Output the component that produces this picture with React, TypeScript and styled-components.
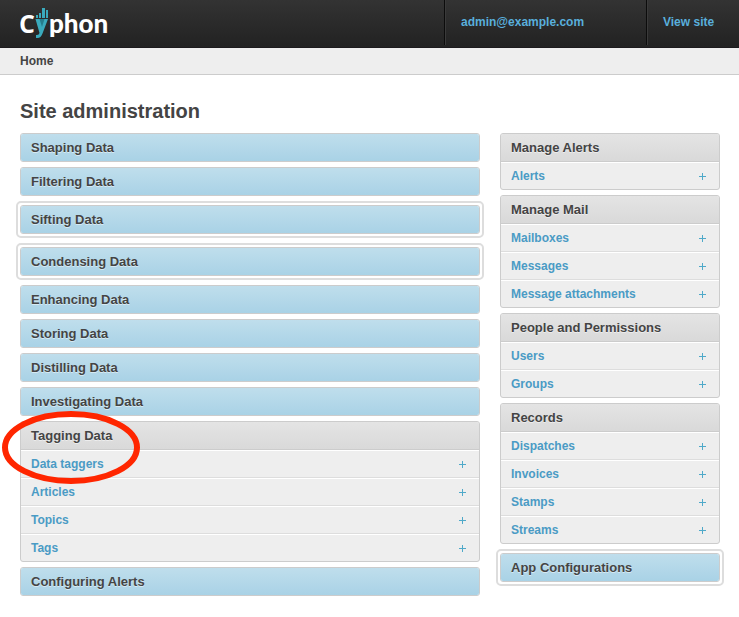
import React from "react";
import styled, { createGlobalStyle, css } from "styled-components";

const GlobalStyle = createGlobalStyle`
  *, *::before, *::after { box-sizing: border-box; }
  body {
    margin: 0;
    background: #fff;
    color: #444;
    font-family: "Liberation Sans", Arial, sans-serif;
    font-size: 12px;
    font-weight: bold;
  }
  a { color: inherit; text-decoration: none; }
`;

const TopBar = styled.header`
  display: flex;
  justify-content: space-between;
  height: 48px;
  padding-left: 20px;
  background: linear-gradient(#333, #222);
  border-bottom: 1px solid #1c1a1d;
`;

const LogoLink = styled.a`
  display: block;
`;

const LogoSvg = styled.svg`
  display: block;
  font-family: Lato, "Open Sans", sans-serif;
  font-size: 26px;
  font-weight: 900;
  fill: #fff;
`;

const LogoInitial = styled.text`
  font-family: "Open Sans", "Noto Sans", sans-serif;
  font-size: 25px;
  font-weight: 700;
`;

const UserTools = styled.nav`
  display: flex;
  height: 45px;
`;

const ToolLink = styled.a<{ $wide?: boolean }>`
  padding: 14px 0 0 16px;
  width: ${({ $wide }) => ($wide ? 202 : 93)}px;
  line-height: 16px;
  color: #59afdc;
  border-left: 1px solid #0c0c0c;
  box-shadow: inset 1px 0 #3a3a3a;
`;

const Breadcrumbs = styled.nav`
  padding: 5px 20px;
  line-height: 16px;
  background: #eee;
  border-bottom: 1px solid #ccc;
`;

const Main = styled.main`
  padding: 24px 19px 20px 20px;
`;

const Title = styled.h1`
  margin: 0 0 10px;
  font-size: 20px;
  line-height: 24px;
`;

const Columns = styled.div`
  display: grid;
  grid-template-columns: minmax(0, 1fr) 220px;
  gap: 20px;
  align-items: start;
`;

const Column = styled.div`
  display: flex;
  flex-direction: column;
  gap: 5px;
`;

const Ring = styled.div`
  margin: 0 -4px;
  padding: 2px;
  border: 2px solid #ddd;
  border-radius: 5px;
`;

const Panel = styled.section`
  border: 1px solid #ccc;
  border-radius: 3px;
  background: #eee;
  overflow: hidden;
`;

const PanelTitle = styled.h2<{ $open: boolean }>`
  margin: 0;
  font-size: 13px;
  text-shadow: 0 1px 0 rgba(255, 255, 255, 0.5);
  ${({ $open }) =>
    $open
      ? css`
          background: linear-gradient(#e4e4e4, #d9d9d9);
          border-bottom: 1px solid #ccc;
        `
      : css`
          background: linear-gradient(#bfdeec, #a9d2e6);
        `}
`;

const Toggle = styled.button`
  display: block;
  width: 100%;
  height: 27px;
  padding: 0 10px;
  border: 0;
  background: none;
  color: inherit;
  font: inherit;
  line-height: 27px;
  text-align: left;
  text-shadow: inherit;
  cursor: pointer;
`;

const Models = styled.ul`
  margin: 0;
  padding: 0;
  list-style: none;
`;

const Model = styled.li`
  display: flex;
  justify-content: space-between;
  align-items: center;
  height: 28px;
  padding: 0 12px 0 10px;
  color: #4a9bc5;
  border-top: 1px solid #fff;
  border-bottom: 1px solid #ddd;
  &:last-child {
    height: 27px;
    border-bottom: 0;
  }
`;

const ModelLink = styled.a`
  line-height: 26px;
`;

const AddLink = styled.a`
  display: flex;
`;

const PanelAnchor = styled.div`
  position: relative;
`;

const Highlight = styled.svg`
  position: absolute;
  left: -18px;
  top: -10px;
  pointer-events: none;
`;

type Group = {
  title: string;
  models?: string[];
  ringed?: boolean;
  highlighted?: boolean;
};

const dataGroups: Group[] = [
  { title: "Shaping Data" },
  { title: "Filtering Data" },
  { title: "Sifting Data", ringed: true },
  { title: "Condensing Data", ringed: true },
  { title: "Enhancing Data" },
  { title: "Storing Data" },
  { title: "Distilling Data" },
  { title: "Investigating Data" },
  {
    title: "Tagging Data",
    models: ["Data taggers", "Articles", "Topics", "Tags"],
    highlighted: true,
  },
  { title: "Configuring Alerts" },
];

const adminGroups: Group[] = [
  { title: "Manage Alerts", models: ["Alerts"] },
  { title: "Manage Mail", models: ["Mailboxes", "Messages", "Message attachments"] },
  { title: "People and Permissions", models: ["Users", "Groups"] },
  { title: "Records", models: ["Dispatches", "Invoices", "Stamps", "Streams"] },
  { title: "App Configurations", ringed: true },
];

function Logo() {
  return (
    <LogoSvg width="90" height="44" viewBox="0 0 90 44" role="img" aria-label="Cyphon">
      <LogoInitial x="-1" y="33">C</LogoInitial>
      <g fill="#3aaabc">
        <path d="M16 15h2v3h-2z M19 13h2v5h-2z M22 8h3v10h-3z M26 10h2v8h-2z" />
        <path d="M15.500 19h12.500l-5.500 14.500q-1.700 4.500-5 4.500h-1.500v-3h1q2 0 2.500-2z" />
      </g>
      <path d="M19.500 19h5l-2.500 8z" fill="#257d8c" />
      <text x="29" y="33">phon</text>
    </LogoSvg>
  );
}

function GroupPanel({ group }: { group: Group }) {
  const open = Boolean(group.models);
  const panel = (
    <Panel>
      <PanelTitle $open={open}>
        <Toggle type="button" aria-expanded={open}>{group.title}</Toggle>
      </PanelTitle>
      {group.models && (
        <Models>
          {group.models.map((name) => (
            <Model key={name}>
              <ModelLink href="#">{name}</ModelLink>
              <AddLink href="#" aria-label={`Add ${name}`}>
                <svg width="9" height="9" viewBox="0 0 9 9">
                  <path d="M1 4.500h7M4.500 1v7" stroke="#4fa9c9" />
                </svg>
              </AddLink>
            </Model>
          ))}
        </Models>
      )}
    </Panel>
  );
  if (group.ringed) return <Ring>{panel}</Ring>;
  if (group.highlighted) {
    return (
      <PanelAnchor>
        {panel}
        <Highlight width="138" height="73" viewBox="0 0 138 73" aria-hidden="true">
          <ellipse cx="69" cy="36.500" rx="66" ry="33.500" fill="none" stroke="#ff2600" strokeWidth="6" />
        </Highlight>
      </PanelAnchor>
    );
  }
  return panel;
}

export default function App() {
  return (
    <>
      <GlobalStyle />
      <TopBar>
        <LogoLink href="#"><Logo /></LogoLink>
        <UserTools aria-label="User tools">
          <ToolLink href="#" $wide>admin@example.com</ToolLink>
          <ToolLink href="#">View site</ToolLink>
        </UserTools>
      </TopBar>
      <Breadcrumbs aria-label="Breadcrumbs">Home</Breadcrumbs>
      <Main>
        <Title>Site administration</Title>
        <Columns>
          <Column>
            {dataGroups.map((g) => <GroupPanel key={g.title} group={g} />)}
          </Column>
          <Column>
            {adminGroups.map((g) => <GroupPanel key={g.title} group={g} />)}
          </Column>
        </Columns>
      </Main>
    </>
  );
}
